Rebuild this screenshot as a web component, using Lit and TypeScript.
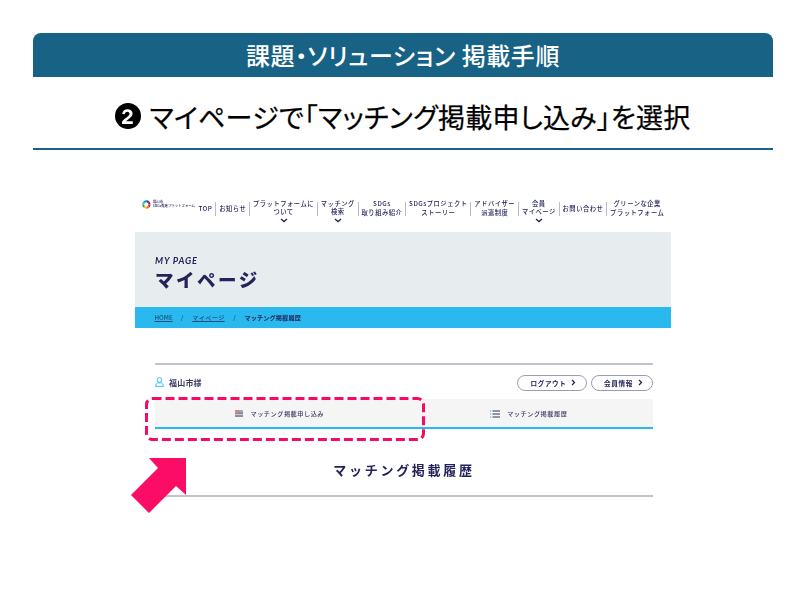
import { LitElement, html, css, svg } from "lit";
import { customElement } from "lit/decorators.js";

const chev = svg`<svg class="chev" width="8" height="5" viewBox="0 0 8 5"><path d="M1 1l3 2.6L7 1" fill="none" stroke="#23235a" stroke-width="1.3"/></svg>`;

const logoColors = ["#e5243b","#f26a2d","#fcc30b","#4c9f38","#26bde2","#0a97d9","#19486a","#a21942"];

@customElement("app-root")
export class AppRoot extends LitElement {
  static styles = css`
    :host { display: block; width: 806px; height: 604px; background: #fff; position: relative; overflow: hidden;
      font-family: "Noto Sans CJK JP", "Noto Sans", sans-serif; }
    .head { margin: 33px 33px 0; height: 44px; background: #176285; border-radius: 8px 8px 0 0; color: #fff;
      display: flex; align-items: center; justify-content: center; font-size: 24px; font-weight: 500; line-height: 44px;
      font-feature-settings: "palt"; letter-spacing: 0.55px; }
    .sub { margin: 0 33px; height: 64px; padding-top: 7px; border-bottom: 2px solid #176285; display: flex; align-items: center; justify-content: center;
      font-size: 27px; font-weight: 400; color: #000; font-feature-settings: "palt"; letter-spacing: 0.3px; -webkit-text-stroke: 0.25px #000; }
    .num { width: 26px; height: 26px; margin-right: 8px; flex: none; }
    .shot { margin: 40px 0 0 135px; width: 536px; filter: blur(0.4px); color: #23235a; }
    .nav { display: flex; align-items: flex-start; padding: 9.5px 0 0 7px; box-sizing: border-box; height: 42px; }
    .logo { width: 53px; display: flex; align-items: center; gap: 2px; flex: none; }
    .logotext { font-size: 3.4px; line-height: 4px; font-weight: 500; white-space: nowrap; }
    .items { display: flex; align-items: flex-start; }
    .it { font-size: 6.3px; line-height: 8.8px; font-weight: 500; text-align: center; white-space: nowrap; letter-spacing: .5px; padding: 0 3.4px; display: flex; flex-direction: column; align-items: center; position: relative; min-height: 19px; justify-content: center; }
    .it + .it::before { content: ""; position: absolute; left: -0.5px; top: 2px; height: 14px; width: 1px; background: #bcbbcc; }
    .it.sp { justify-content: flex-start; }
    .chev { margin-top: 1px; }
    .band { height: 75px; background: #e7ecef; padding: 23px 0 0 20px; box-sizing: border-box; }
    .en { font-family: Lato, sans-serif; font-style: italic; font-weight: 700; font-size: 9.2px; line-height: 12px; letter-spacing: .8px; }
    .ja { font-size: 18.5px; line-height: 26px; font-weight: 900; letter-spacing: 2.5px; margin-top: -1px; }
    .crumb { height: 21px; background: #29b9ee; display: flex; align-items: center; gap: 8.5px; padding-left: 19.5px; font-size: 6.2px; font-weight: 500; color: #1f4f80; letter-spacing: .3px; }
    .crumb a { text-decoration: underline; }
    .crumb a.home { letter-spacing: 0; }
    .crumb b { font-weight: 700; color: #23235a; letter-spacing: .1px; }
    .main { margin: 35px 18px 0 20px; border-top: 2px solid #c3c1ce; }
    .user { display: flex; align-items: center; justify-content: space-between; height: 34px; }
    .name { display: flex; align-items: center; gap: 5px; font-size: 8px; font-weight: 700; letter-spacing: .2px; color: #3a3a62; }
    .btns { display: flex; gap: 4px; padding-top: 1px; }
    .btn { width: 62px; height: 16px; box-sizing: border-box; border: 1px solid #9d9cb6; border-radius: 8px; font-size: 6.6px; font-weight: 700; letter-spacing: .6px; display: flex; align-items: center; justify-content: center; gap: 5px; padding-left: 3px; }
    .btn.wide { width: 70px; }
    .tabs { display: flex; height: 30px; box-sizing: border-box; background: #f5f5f5; border-bottom: 2px solid #29b9ee; }
    .tab { flex: 1; display: flex; align-items: center; justify-content: center; gap: 7.5px; font-size: 6.2px; font-weight: 500; letter-spacing: .5px; color: #3a3a62; padding-top: 1px; }
    .h { text-align: center; font-size: 13px; font-weight: 700; letter-spacing: 2.7px; line-height: 20px; margin-top: 31px; }
    .rule2 { border-top: 2px solid #c3c1ce; margin-top: 15px; }
    .dash { position: absolute; left: 145px; top: 397px; width: 280px; height: 44px; filter: blur(0.3px); }
    .arrow { position: absolute; left: 131px; top: 458px; width: 55px; height: 55px; }
  `;

  render() {
    const items: [string[], boolean][] = [
      [["TOP"], false], [["お知らせ"], false], [["プラットフォームに", "ついて"], true], [["マッチング", "検索"], true],
      [["SDGs", "取り組み紹介"], false], [["SDGsプロジェクト", "ストーリー"], false], [["アドバイザー", "派遣制度"], false],
      [["会員", "マイページ"], true], [["お問い合わせ"], false], [["グリーンな企業", "プラットフォーム"], false],
    ];
    return html`
      <div class="head">課題・ソリューション 掲載手順</div>
      <div class="sub">
        <svg class="num" viewBox="0 0 25 25"><circle cx="12.5" cy="12.5" r="12.5" fill="#000"/><path d="M6.8 20.2v-2.3c1.4-1.9 3.1-3.2 4.9-4.5 1.5-1.1 2.2-1.9 2.2-3 0-1.2-.8-1.9-2-1.9-1.4 0-2.3.9-2.5 2.4l-2.5-.4c.3-2.8 2.3-4.4 5.1-4.4 3 0 4.9 1.6 4.9 4.1 0 2-1.3 3.3-3.1 4.6-1.2.9-2.4 1.7-3.2 2.8h6.5v2.6z" fill="#fff"/></svg>
        <span>マイページで「マッチング掲載申し込み」を選択</span>
      </div>
      <div class="shot">
        <div class="nav">
          <div class="logo">
            <svg width="9" height="9" viewBox="0 0 18 18">
              ${logoColors.map((c, i) => svg`<circle cx="9" cy="9" r="6.5" fill="none" stroke=${c} stroke-width="4" stroke-dasharray="5.1 35.8" transform="rotate(${i * 45} 9 9)"/>`)}
            </svg>
            <div class="logotext">福山市<br />SDGs推進プラットフォーム</div>
          </div>
          <div class="items">
            ${items.map(([lines, c]) => html`<div class="it ${c ? "sp" : ""}">${lines.map((l) => html`<div>${l}</div>`)}${c ? chev : ""}</div>`)}
          </div>
        </div>
        <div class="band">
          <div class="en">MY PAGE</div>
          <div class="ja">マイページ</div>
        </div>
        <div class="crumb"><a class="home">HOME</a><span>/</span><a>マイページ</a><span>/</span><b>マッチング掲載履歴</b></div>
        <div class="main">
          <div class="user">
            <div class="name">
              <svg width="9" height="10" viewBox="0 0 9 10"><circle cx="4.5" cy="3" r="2.3" fill="none" stroke="#29b9ee" stroke-width=".9"/><path d="M.6 9.4c0-2.4 1.4-3.5 2.4-3.7.9.4 2.1.4 3 0 1 .2 2.4 1.3 2.4 3.7z" fill="none" stroke="#29b9ee" stroke-width=".9"/></svg>
              福山市様
            </div>
            <div class="btns">
              <div class="btn wide">ログアウト<svg width="5" height="7" viewBox="0 0 5 7"><path d="M1 1l2.5 2.5L1 6" fill="none" stroke="#23235a" stroke-width="1.3"/></svg></div>
              <div class="btn">会員情報<svg width="5" height="7" viewBox="0 0 5 7"><path d="M1 1l2.5 2.5L1 6" fill="none" stroke="#23235a" stroke-width="1.3"/></svg></div>
            </div>
          </div>
          <div class="tabs">
            <div class="tab">
              <svg width="8" height="7" viewBox="0 0 8 7"><rect width="8" height="7" fill="#8b8ca0"/><rect width="3.5" height="3" fill="#d98a6c"/><path d="M4.2 1h3.8M0 4.6h8" stroke="#f5f5f5" stroke-width=".6"/></svg>
              <span>マッチング掲載申し込み</span>
            </div>
            <div class="tab">
              <svg width="10" height="8" viewBox="0 0 10 8"><path d="M0 1h1.2M0 4h1.2M0 7h1.2" stroke="#29b9ee" stroke-width="1"/><path d="M2.5 1H10M2.5 4H10M2.5 7H10" stroke="#33335c" stroke-width="1"/></svg>
              <span>マッチング掲載履歴</span>
            </div>
          </div>
          <div class="h">マッチング掲載履歴</div>
          <div class="rule2"></div>
        </div>
      </div>
      <svg class="dash" viewBox="0 0 280 44"><rect x="1.5" y="1.5" width="277" height="41" rx="6" fill="none" stroke="#f50a64" stroke-width="3" stroke-dasharray="9 4"/></svg>
      <svg class="arrow" viewBox="0 0 55 55"><path d="M18 0H55V37L45 28 18 55 0 37 27 10z" fill="#fb0d66"/></svg>
    `;
  }
}
